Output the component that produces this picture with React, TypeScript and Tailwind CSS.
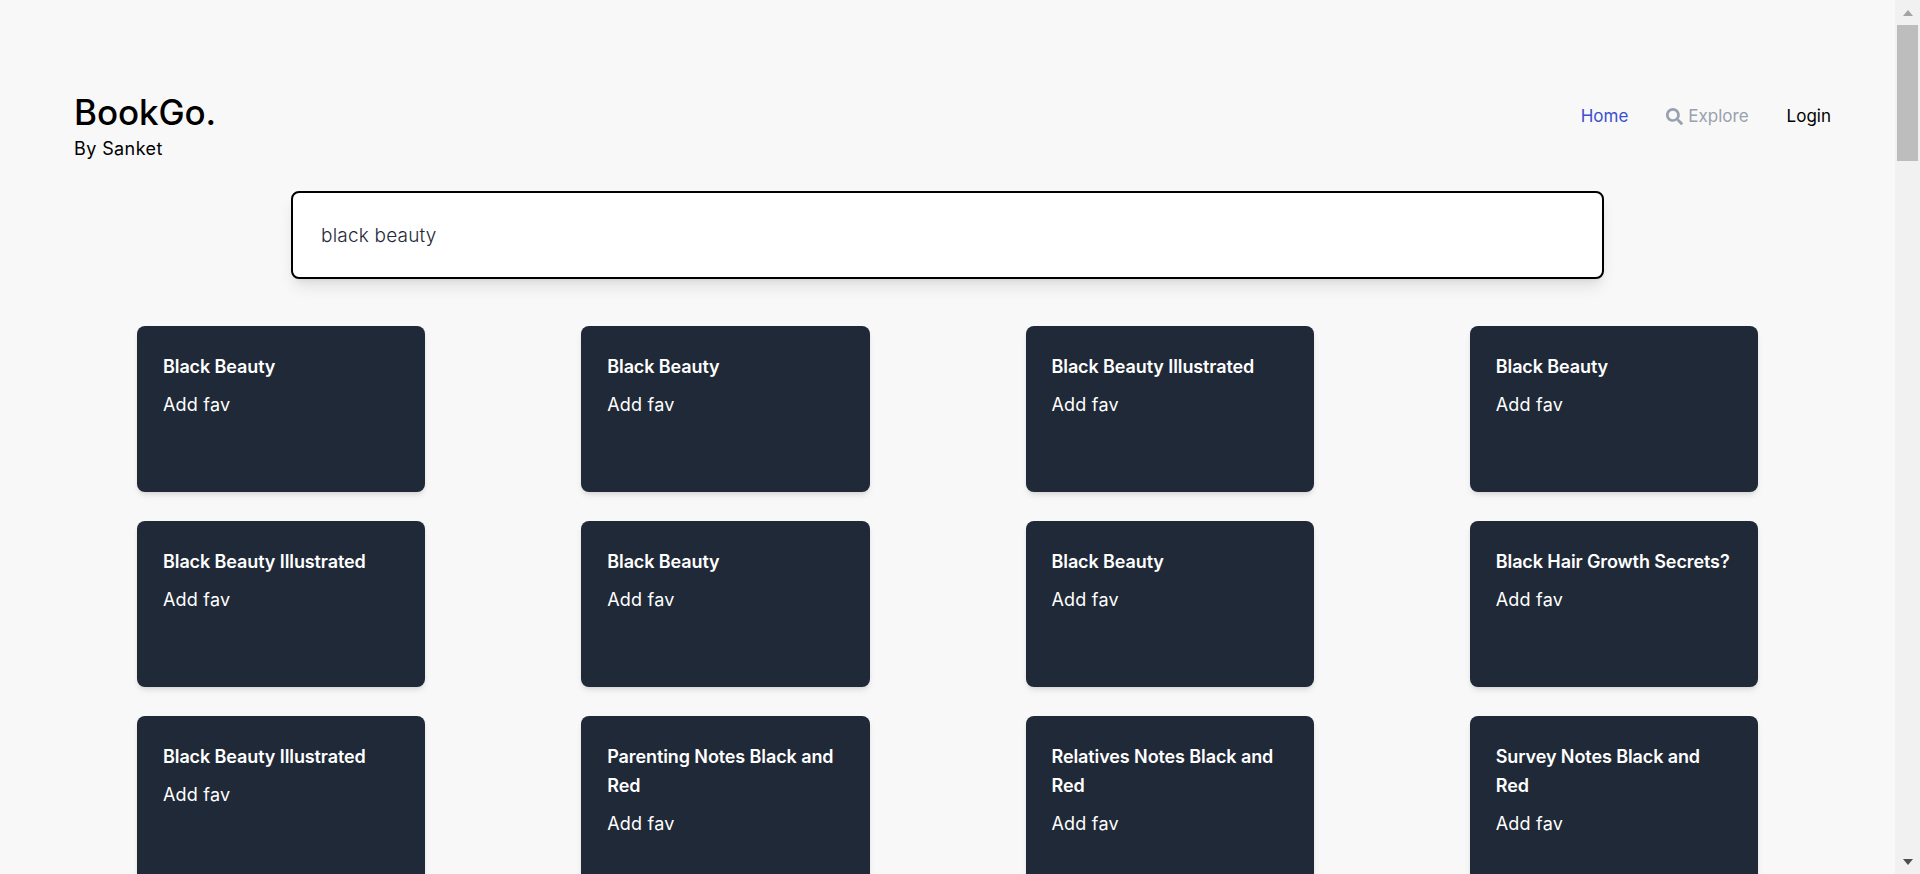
import { FaSearch } from "react-icons/fa";

const books = [
  "Black Beauty",
  "Black Beauty",
  "Black Beauty Illustrated",
  "Black Beauty",
  "Black Beauty Illustrated",
  "Black Beauty",
  "Black Beauty",
  "Black Hair Growth Secrets?",
  "Black Beauty Illustrated",
  "Parenting Notes Black and Red",
  "Relatives Notes Black and Red",
  "Survey Notes Black and Red",
];

function BookCard({ title }: { title: string }) {
  return (
    <div className="min-h-[166px] rounded-lg bg-[#1f2937] px-[26px] pt-[26px] text-white shadow-md">
      <h2 className="text-[18px] leading-[29px] font-semibold tracking-[-0.1px]">{title}</h2>
      <p className="mt-[10px] text-[18px] leading-[28px] font-normal tracking-[0.2px] text-white">Add fav</p>
    </div>
  );
}

function Scrollbar() {
  return (
    <aside className="flex h-screen w-[25px] shrink-0 flex-col bg-[#f1f1f1] px-[2px]">
      <div className="flex h-[25px] w-full items-center justify-center">
        <div className="h-0 w-0 border-x-[5.5px] border-b-[6px] border-x-transparent border-b-[#a3a3a3]" />
      </div>
      <div className="h-[136px] w-full shrink-0 bg-[#bdbdbd]" />
      <div className="flex-1" />
      <div className="flex h-[25px] w-full items-center justify-center">
        <div className="h-0 w-0 border-x-[5.5px] border-t-[6px] border-x-transparent border-t-[#505050]" />
      </div>
    </aside>
  );
}

export default function App() {
  return (
    <div className="flex h-screen overflow-hidden bg-[#f8f8f8] font-['Inter','Liberation_Sans',sans-serif] text-black">
      <main className="min-w-0 flex-1">
        <header className="flex items-start justify-between pt-[90px] pr-[64px] pl-[74px]">
          <div>
            <h1 className="text-[35px] leading-[44px] font-medium tracking-[-0.1px]">BookGo.</h1>
            <p className="mt-[2px] text-[18px] leading-[26px] font-normal tracking-[0.4px]">By Sanket</p>
          </div>
          <nav className="mt-[12px] flex items-center gap-[38px] text-[17px] leading-[28px]">
            <a className="text-[#3b50ce]">Home</a>
            <a className="flex items-center gap-[5px] text-gray-400">
              <FaSearch size={17} />
              Explore
            </a>
            <a>Login</a>
          </nav>
        </header>

        <div className="mt-[29px] px-[291px]">
          <div className="flex h-[88px] items-center rounded-lg border-2 border-black bg-white px-[28px] pt-[2px] text-[19px] font-light tracking-[0.2px] text-gray-800 shadow-lg">
            black beauty
          </div>
        </div>

        <div className="mt-[47px] grid grid-cols-4 gap-x-[156px] gap-y-[29px] pr-[137px] pb-10 pl-[137px]">
          {books.map((title, i) => (
            <BookCard key={i} title={title} />
          ))}
        </div>
      </main>
      <Scrollbar />
    </div>
  );
}
